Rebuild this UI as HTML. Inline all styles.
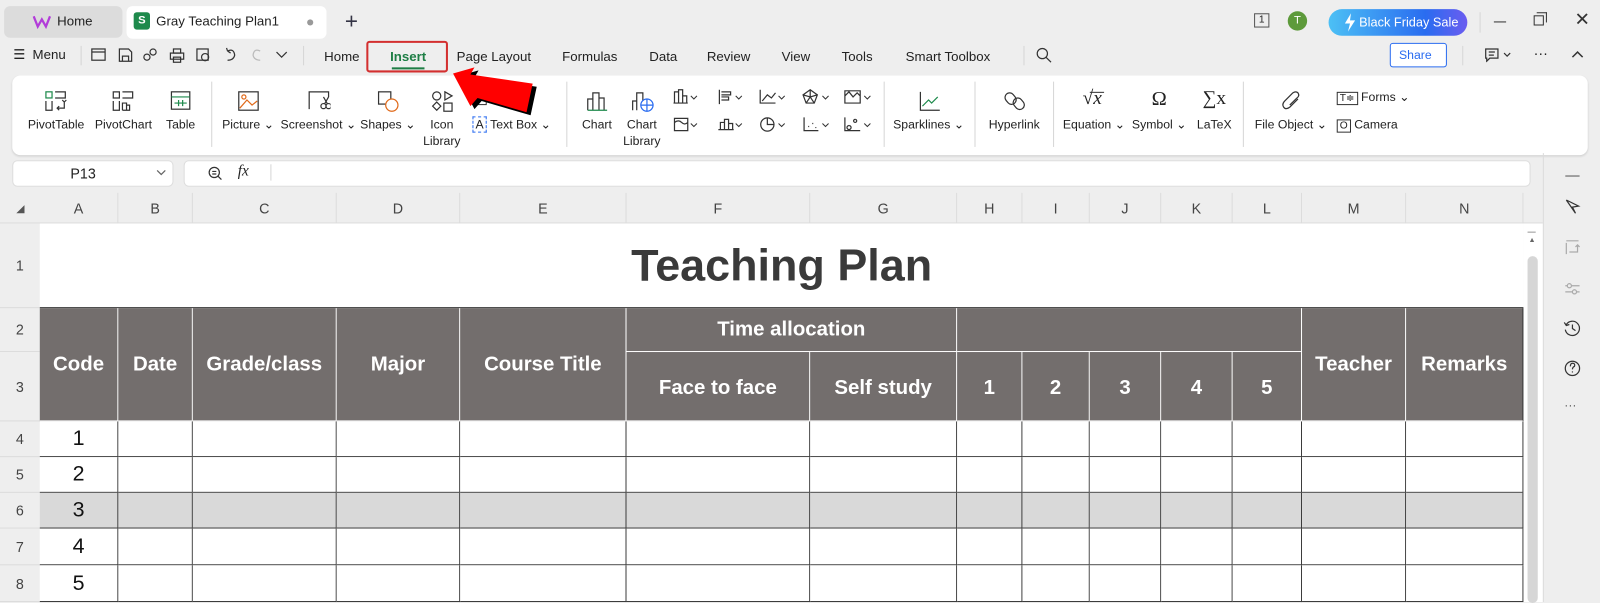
<!DOCTYPE html>
<html><head><meta charset="utf-8"><style>
*{box-sizing:border-box;margin:0;padding:0}
body{width:1600px;height:602px;overflow:hidden;background:#eeeeee;font-family:"Liberation Sans",Arial,sans-serif;color:#222}
#w{position:absolute;left:0;top:0;width:1568px;height:590px;transform:scale(1.0204);transform-origin:0 0;background:#eeeeee}
.a{position:absolute}
.t{position:absolute;font-size:12px;color:#222;white-space:nowrap}
.c{text-align:center;transform:translateX(-50%)}
svg.i{position:absolute;fill:none;stroke:#333;stroke-width:1.2}
.sep{position:absolute;width:1px;background:#d6d6d6}
.cell{position:absolute;border-right:1px solid #fff;border-bottom:1px solid #fff;background:#736e6d;color:#fff;font-weight:bold;font-size:20px;display:flex;align-items:center;justify-content:center}
.dc{position:absolute;border-right:1px solid #3a3a3a;border-bottom:1px solid #3a3a3a;background:#fff;font-size:21px;display:flex;align-items:center;justify-content:center;color:#111}
.ch{position:absolute;top:189px;height:30px;border-right:1px solid #dcdcdc;font-size:14px;color:#444;display:flex;align-items:center;justify-content:center}
.rh{position:absolute;left:0;width:39px;border-bottom:1px solid #dcdcdc;font-size:14px;color:#444;display:flex;align-items:center;justify-content:center}
</style></head><body><div id="w">
<div class="a" style="left:4px;top:6px;width:116px;height:31px;background:#dcdcdc;border-radius:6px"></div>
<svg class="i" style="left:32px;top:13px" width="18" height="16" viewBox="0 0 18 16"><path d="M1 3 L5 13 L9 6 L13 13 L17 3" stroke="#b23cd9" stroke-width="2.2"/></svg>
<div class="t" style="left:56px;top:13px;font-size:13px">Home</div>
<div class="a" style="left:124px;top:6px;width:196px;height:32px;background:#fff;border-radius:6px"></div>
<div class="a" style="left:131px;top:12px;width:16px;height:17px;background:#1e8a4c;border-radius:3px;color:#fff;font-size:11px;font-weight:bold;text-align:center;line-height:17px">S</div>
<div class="t" style="left:153px;top:13px;font-size:13px">Gray Teaching Plan1</div>
<div class="a" style="left:301px;top:19px;width:6px;height:6px;border-radius:50%;background:#999"></div>
<div class="t" style="left:338px;top:8px;font-size:22px;color:#334">+</div>
<div class="a" style="left:1229px;top:13px;width:15px;height:14px;border:1px solid #555;font-size:10px;text-align:center;line-height:12px">1</div>
<div class="a" style="left:1262px;top:11px;width:19px;height:19px;border-radius:50%;background:#5d9a3b;color:#fff;font-size:11px;text-align:center;line-height:19px">T</div>
<div class="a" style="left:1302px;top:9px;width:136px;height:26px;border-radius:13px;background:linear-gradient(90deg,#4cc0f5,#2a6cf0 70%,#6b5cf0);color:#fff;font-size:12.5px;line-height:26px;padding-left:30px">Black Friday Sale</div>
<svg class="i" style="left:1317px;top:13px" width="12" height="18" viewBox="0 0 12 18"><path d="M7 0 L1 10 H6 L4 18 L11 7 H6 Z" fill="#fff" stroke="none"/></svg>
<div class="sep" style="left:1450px;top:12px;height:20px"></div>
<div class="a" style="left:1464px;top:21px;width:12px;height:1px;background:#333"></div>
<div class="a" style="left:1503px;top:15px;width:10px;height:10px;border:1px solid #333;background:#eee"></div>
<div class="a" style="left:1506px;top:12px;width:10px;height:10px;border-top:1px solid #333;border-right:1px solid #333"></div>
<div class="t" style="left:1543px;top:9px;font-size:18px;color:#333">✕</div>
<div class="t" style="left:13px;top:46px;font-size:13px">☰&nbsp; Menu</div>
<div class="sep" style="left:79px;top:45px;height:19px"></div>
<svg class="i" style="left:89px;top:46px" width="180" height="16" viewBox="0 0 180 16"><rect x="1" y="2" width="13" height="11"/><path d="M1 5 H14"/><path d="M28 2 H37 L40 5 V14 H28 Z M31 14 V9 H37 V14"/><circle cx="55" cy="10" r="3"/><circle cx="61" cy="5" r="3"/><rect x="78" y="6" width="13" height="6"/><rect x="81" y="2" width="7" height="4"/><rect x="81" y="10" width="7" height="5"/><rect x="104" y="2" width="11" height="11"/><circle cx="112" cy="10" r="3.5"/><path d="M134 4 Q140 1 141 8 Q140 13 134 13 M134 4 L133 1 M134 4 L137 6"/><path d="M166 4 Q160 1 159 8 Q160 13 166 13" stroke="#bbb"/></svg>
<svg class="i" style="left:270px;top:50px" width="12" height="8"><path d="M1 1 L6 6 L11 1"/></svg>
<div class="sep" style="left:297px;top:45px;height:19px"></div>
<div class="t c" style="left:335px;top:48px;font-size:13px">Home</div>
<div class="a" style="left:359px;top:40px;width:80px;height:31px;border:2px solid #d32f2f;border-radius:3px"></div>
<div class="t c" style="left:400px;top:48px;font-size:13px;font-weight:bold;color:#1e7e45">Insert</div>
<div class="a" style="left:384px;top:66px;width:32px;height:2px;background:#1e7e45"></div>
<div class="t c" style="left:484px;top:48px;font-size:13px">Page Layout</div>
<div class="t c" style="left:578px;top:48px;font-size:13px">Formulas</div>
<div class="t c" style="left:650px;top:48px;font-size:13px">Data</div>
<div class="t c" style="left:714px;top:48px;font-size:13px">Review</div>
<div class="t c" style="left:780px;top:48px;font-size:13px">View</div>
<div class="t c" style="left:840px;top:48px;font-size:13px">Tools</div>
<div class="t c" style="left:929px;top:48px;font-size:13px">Smart Toolbox</div>
<div class="sep" style="left:1003px;top:45px;height:19px"></div>
<svg class="i" style="left:1015px;top:46px" width="16" height="16"><circle cx="6.5" cy="6.5" r="5"/><path d="M10 10 L15 15"/></svg>
<div class="a" style="left:1362px;top:42px;width:56px;height:24px;border:1px solid #2a6cf0;border-radius:3px;background:#fff;color:#2a6cf0;font-size:12px;line-height:22px;padding-left:8px">Share <span style="font-size:9px;margin-left:4px">⌄</span></div>
<div class="sep" style="left:1433px;top:45px;height:19px"></div>
<svg class="i" style="left:1455px;top:47px" width="28" height="14"><path d="M1 1 H13 V10 H5 L2 13 V10 H1 Z M4 4 H10 M4 7 H9"/><path d="M19 5 L22 8 L25 5"/></svg>
<div class="t" style="left:1503px;top:44px;font-size:14px">···</div>
<svg class="i" style="left:1540px;top:49px" width="12" height="8"><path d="M1 7 L6 2 L11 7" stroke-width="1.5"/></svg>
<div class="a" style="left:12px;top:74px;width:1544px;height:78px;background:#fff;border-radius:8px;box-shadow:0 1px 2px rgba(0,0,0,.12)"></div>
<svg class="i" style="left:44px;top:89px" width="22" height="20"><rect x="1" y="1" width="6" height="6" stroke="#1e8a4c"/><path d="M10 1 H20 V7 H10 M1 10 V19 H7 V10 M12 17 H19 V11 M17 9 L19 11 L21 9 M14 15 L12 17 L14 19"/></svg>
<div class="t c" style="left:55px;top:115px">PivotTable</div>
<svg class="i" style="left:110px;top:89px" width="22" height="20"><path d="M1 1 H7 V7 H1 Z M10 1 H20 V7 H10 M1 10 V19 H7 V10 M10 19 V12 H14 V19 M14 19 V14 H17 V19 H10"/></svg>
<div class="t c" style="left:121px;top:115px">PivotChart</div>
<svg class="i" style="left:167px;top:89px" width="20" height="20"><rect x="1" y="1" width="18" height="17"/><path d="M1 6 H19 M4 12 H16 M8 9 V15 M12 9 V15" stroke="#1e8a4c"/></svg>
<div class="t c" style="left:177px;top:115px">Table</div>
<div class="sep" style="left:207px;top:80px;height:64px"></div>
<svg class="i" style="left:233px;top:89px" width="22" height="20"><rect x="1" y="1" width="19" height="18"/><circle cx="6" cy="6" r="2" stroke="#e06a1b"/><path d="M2 17 L9 9 L14 14 L19 10" stroke="#e06a1b"/></svg>
<div class="t c" style="left:243px;top:115px">Picture ⌄</div>
<svg class="i" style="left:302px;top:89px" width="22" height="20"><path d="M1 18 V1 H20 V6"/><circle cx="15" cy="15" r="2.5"/><circle cx="20" cy="15" r="2.5"/><path d="M16 13 L20 6 M19 13 L15 6"/></svg>
<div class="t c" style="left:312px;top:115px">Screenshot ⌄</div>
<svg class="i" style="left:370px;top:89px" width="22" height="22"><rect x="1" y="1" width="12" height="12"/><circle cx="14" cy="14" r="6" stroke="#e06a1b" fill="#fff"/></svg>
<div class="t c" style="left:380px;top:115px">Shapes ⌄</div>
<svg class="i" style="left:423px;top:89px" width="22" height="22"><circle cx="5" cy="5" r="4"/><path d="M13 1 L20 5 L13 9 Z M5 11 L9 15 L5 19 L1 15 Z"/><rect x="12" y="12" width="8" height="8"/></svg>
<div class="t c" style="left:433px;top:115px">Icon</div>
<div class="t c" style="left:433px;top:131px">Library</div>
<div class="t" style="left:463px;top:88px"><span style="border:1px solid #333;padding:0 2px">A</span>&nbsp; Art ⌄</div>
<div class="t" style="left:463px;top:115px"><span style="border:1px dashed #2a6cf0;padding:0 2px">A</span>&nbsp;Text Box ⌄</div>
<div class="sep" style="left:555px;top:80px;height:64px"></div>
<svg class="i" style="left:575px;top:89px" width="22" height="20"><path d="M1 19 V8 H6 V19 M6 19 V2 H12 V19 M12 19 V7 H17 V19"/><path d="M1 19 H20" stroke="#1e8a4c"/></svg>
<div class="t c" style="left:585px;top:115px">Chart</div>
<svg class="i" style="left:619px;top:89px" width="24" height="22"><path d="M1 19 V10 H5 V19 M5 19 V2 H11 V10"/><circle cx="15" cy="14" r="6" stroke="#2a6cf0"/><path d="M9 14 H21 M15 8 V20" stroke="#2a6cf0"/></svg>
<div class="t c" style="left:629px;top:115px">Chart</div>
<div class="t c" style="left:629px;top:131px">Library</div>
<svg class="i" style="left:660px;top:87px" width="200" height="46"><path d="M1 14 V3 H5 V14 M5 14 V1 H9 V14 M9 14 V7 H13 V14 M0 14 H14"/><path d="M45 1 V15 M47 3 H56 V6 H47 M47 8 H54 V11 H47"/><path d="M85 1 V14 H100 M87 12 L92 6 L96 9 L100 4"/><path d="M134 1 L141 6 L138 14 H130 L127 6 Z M134 1 L134 8 L141 6 M134 8 L130 14 M134 8 L138 14 M134 8 L127 6"/><path d="M168 2 H183 V14 H168 Z M168 7 L172 3 L176 8 L180 4 L183 7"/>
<path d="M1 29 H14 V41 H1 Z M1 33 Q5 30 8 33 Q11 36 14 33"/><path d="M46 40 V33 H50 V40 M50 40 V30 H54 V40 M54 40 V34 H58 V40 M44 40 H59"/><circle cx="92" cy="35" r="6.5"/><path d="M92 28.5 V35 H98.5"/><path d="M128 28 V41 H142 M132 37 h1 M136 34 h1 M139 38 h1"/><path d="M168 28 V41 H183 M172 36 a2 2 0 1 0 0.1 0 M178 30 a1.5 1.5 0 1 0 0.1 0"/>
<path d="M17 7 L20 10 L23 7 M61 7 L64 10 L67 7 M103 7 L106 10 L109 7 M146 7 L149 10 L152 7 M187 7 L190 10 L193 7 M17 34 L20 37 L23 34 M61 34 L64 37 L67 34 M103 34 L106 37 L109 34 M146 34 L149 37 L152 34 M187 34 L190 37 L193 34" stroke-width="1"/></svg>
<div class="sep" style="left:866px;top:80px;height:64px"></div>
<svg class="i" style="left:900px;top:89px" width="22" height="20"><path d="M2 1 V19 H21"/><path d="M4 15 L10 9 L13 12 L19 6" stroke="#1e8a4c"/></svg>
<div class="t c" style="left:910px;top:115px">Sparklines ⌄</div>
<div class="sep" style="left:955px;top:80px;height:64px"></div>
<svg class="i" style="left:984px;top:89px" width="22" height="20"><rect x="2" y="2" width="9" height="12" rx="4.5" transform="rotate(-40 6 8)"/><rect x="10" y="7" width="9" height="12" rx="4.5" transform="rotate(-40 14 13)"/></svg>
<div class="t c" style="left:994px;top:115px">Hyperlink</div>
<div class="sep" style="left:1032px;top:80px;height:64px"></div>
<div class="t" style="left:1061px;top:86px;font-size:19px;font-family:'Liberation Serif',serif;font-style:italic">√x</div>
<div class="a" style="left:1068px;top:90px;width:14px;height:1px;background:#333"></div>
<div class="t c" style="left:1072px;top:115px">Equation ⌄</div>
<div class="t c" style="left:1136px;top:86px;font-size:20px;font-family:'Liberation Serif',serif">Ω</div>
<div class="t c" style="left:1136px;top:115px">Symbol ⌄</div>
<div class="t c" style="left:1190px;top:86px;font-size:19px;font-family:'Liberation Serif',serif">∑x</div>
<div class="t c" style="left:1190px;top:115px">LaTeX</div>
<div class="sep" style="left:1218px;top:80px;height:64px"></div>
<svg class="i" style="left:1255px;top:89px" width="22" height="20"><path d="M17 8 L9 16 Q5 19 3 16 Q1 13 4 10 L12 2 Q15 0 17 2 Q19 5 16 7 L9 14"/></svg>
<div class="t c" style="left:1265px;top:115px">File Object ⌄</div>
<div class="t" style="left:1310px;top:88px"><span style="border:1px solid #333;font-size:10px;padding:0 2px">T≑</span> Forms ⌄</div>
<div class="t" style="left:1310px;top:115px"><span style="border:1px solid #333;font-size:10px;padding:0 2px">O</span> Camera</div>
<svg class="a" style="left:440px;top:60px" width="100" height="60" viewBox="0 0 100 60"><polygon points="4,12 25,6 21,13 82,22 76,50 28,36 21,44" fill="#000" transform="translate(4,3)"/><polygon points="4,12 25,6 21,13 82,22 76,50 28,36 21,44" fill="#f00"/></svg>
<div class="a" style="left:12px;top:157px;width:158px;height:26px;background:#fff;border:1px solid #ddd;border-radius:5px"></div>
<div class="t" style="left:69px;top:162px;font-size:14px">P13</div>
<svg class="i" style="left:153px;top:166px" width="10" height="7"><path d="M1 1 L5 5 L9 1" stroke="#666"/></svg>
<div class="a" style="left:180px;top:157px;width:1320px;height:26px;background:#fff;border:1px solid #ddd;border-radius:5px"></div>
<svg class="i" style="left:203px;top:162px" width="16" height="16"><circle cx="7" cy="7" r="5"/><path d="M5 6 H9 M5 8.5 H9 M10.5 10.5 L14 14"/></svg>
<div class="t" style="left:233px;top:160px;font-size:15px;font-style:italic;font-family:'Liberation Serif',serif">fx</div>
<div class="sep" style="left:265px;top:161px;height:16px"></div>
<div class="a" style="left:0;top:189px;width:1512px;height:30px;background:#eeeeee;border-bottom:1px solid #dcdcdc"></div>
<svg class="i" style="left:15px;top:200px" width="10" height="10"><path d="M9 1 V9 H1 Z" fill="#555" stroke="none"/></svg>
<div class="ch" style="left:39px;width:77px">A</div><div class="ch" style="left:116px;width:73px">B</div><div class="ch" style="left:189px;width:141px">C</div><div class="ch" style="left:330px;width:121px">D</div><div class="ch" style="left:451px;width:163px">E</div><div class="ch" style="left:614px;width:180px">F</div><div class="ch" style="left:794px;width:144px">G</div><div class="ch" style="left:938px;width:64px">H</div><div class="ch" style="left:1002px;width:66px">I</div><div class="ch" style="left:1068px;width:70px">J</div><div class="ch" style="left:1138px;width:70px">K</div><div class="ch" style="left:1208px;width:68px">L</div><div class="ch" style="left:1276px;width:102px">M</div><div class="ch" style="left:1378px;width:115px">N</div>
<div class="rh" style="top:219px;height:83px">1</div><div class="rh" style="top:302px;height:43px">2</div><div class="rh" style="top:345px;height:68px">3</div><div class="rh" style="top:413px;height:35px">4</div><div class="rh" style="top:448px;height:35px">5</div><div class="rh" style="top:483px;height:35px">6</div><div class="rh" style="top:518px;height:36px">7</div><div class="rh" style="top:554px;height:36px">8</div>
<div class="a" style="left:39px;top:219px;width:1454px;height:83px;background:#fff;border-bottom:1px solid #333"></div>
<div class="t c" style="left:766px;top:236px;font-size:44px;font-weight:bold;color:#3a3a3a">Teaching Plan</div>
<div class="cell" style="left:39px;top:302px;width:77px;height:111px">Code</div>
<div class="cell" style="left:116px;top:302px;width:73px;height:111px">Date</div>
<div class="cell" style="left:189px;top:302px;width:141px;height:111px">Grade/class</div>
<div class="cell" style="left:330px;top:302px;width:121px;height:111px">Major</div>
<div class="cell" style="left:451px;top:302px;width:163px;height:111px">Course Title</div>
<div class="cell" style="left:614px;top:302px;width:324px;height:43px">Time allocation</div>
<div class="cell" style="left:938px;top:302px;width:338px;height:43px"></div>
<div class="cell" style="left:614px;top:345px;width:180px;height:68px;padding-top:4px">Face to face</div>
<div class="cell" style="left:794px;top:345px;width:144px;height:68px;padding-top:4px">Self study</div>
<div class="cell" style="left:938px;top:345px;width:64px;height:68px;padding-top:4px">1</div>
<div class="cell" style="left:1002px;top:345px;width:66px;height:68px;padding-top:4px">2</div>
<div class="cell" style="left:1068px;top:345px;width:70px;height:68px;padding-top:4px">3</div>
<div class="cell" style="left:1138px;top:345px;width:70px;height:68px;padding-top:4px">4</div>
<div class="cell" style="left:1208px;top:345px;width:68px;height:68px;padding-top:4px">5</div>
<div class="cell" style="left:1276px;top:302px;width:102px;height:111px">Teacher</div>
<div class="cell" style="left:1378px;top:302px;width:115px;height:111px;border-right:1px solid #333">Remarks</div>
<div id="rows"></div>
<div class="a" style="left:1493px;top:219px;width:19px;height:371px;background:#fff"></div>
<div class="a" style="left:1497px;top:227px;width:8px;height:1px;background:#999"></div>
<div class="t" style="left:1498px;top:232px;font-size:7px;color:#666">▲</div>
<div class="a" style="left:1497px;top:251px;width:10px;height:340px;background:#d6d6d6;border-radius:5px"></div>
<div class="a" style="left:1512px;top:150px;width:1px;height:440px;background:#dcdcdc"></div>
<div class="a" style="left:1534px;top:172px;width:14px;height:1px;background:#555"></div>
<svg class="i" style="left:1533px;top:195px" width="16" height="16"><path d="M2 1 L14 7 L8 8 L11 14 L2 1"/></svg>
<svg class="i" style="left:1533px;top:235px" width="16" height="16"><path d="M2 1 H14 M2 3 V14 M5 12 H13 V5 M11 7 L13 5 L15 7" stroke="#aaa"/></svg>
<svg class="i" style="left:1533px;top:275px" width="16" height="16"><path d="M1 5 H15 M1 11 H15" stroke="#aaa"/><circle cx="5" cy="5" r="2" fill="#eee" stroke="#aaa"/><circle cx="10" cy="11" r="2" fill="#eee" stroke="#aaa"/></svg>
<svg class="i" style="left:1532px;top:313px" width="18" height="18"><path d="M3 5 A7 7 0 1 1 2 10 M1 3 L3 6 L6 5 M9 5 V9 L12 11"/></svg>
<svg class="i" style="left:1532px;top:352px" width="18" height="18"><circle cx="9" cy="9" r="7"/><path d="M7 7 Q7 4 9 4 Q12 4 11 7 Q9 8 9 10 M9 12 V13"/></svg>
<div class="t" style="left:1533px;top:390px;font-size:12px;color:#555">···</div>
</div>
<script>
var cols=[39,116,189,330,451,614,794,938,1002,1068,1138,1208,1276,1378,1493];
var tops=[413,448,483,518,554,590];var h='';
for(var r=0;r<5;r++){for(var c=0;c<14;c++){var bg=r==2?'#d9d9d9':'#fff';
h+='<div class="dc" style="left:'+cols[c]+'px;top:'+tops[r]+'px;width:'+(cols[c+1]-cols[c])+'px;height:'+(tops[r+1]-tops[r])+'px;background:'+bg+'">'+(c==0?(r+1):'')+'</div>';}}
document.getElementById('rows').outerHTML=h;
</script>
</body></html>
